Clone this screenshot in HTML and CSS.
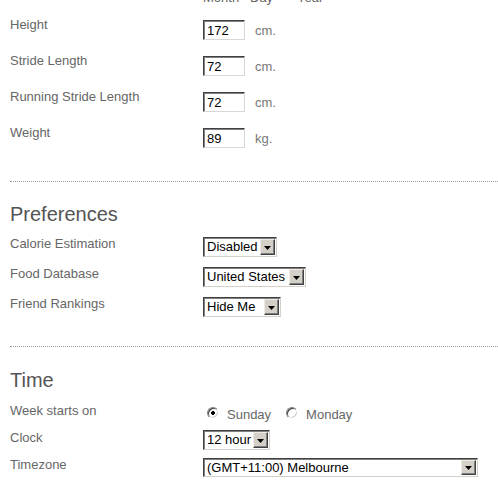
FILE: index.html
```html
<!DOCTYPE html>
<html>
<head>
<meta charset="utf-8">
<link rel="stylesheet" href="styles.css">
</head>
<body>
<div class="page">
  <div class="row dates">
    <span class="lbl"></span>
    <div class="ctl"><span class="d-month">Month</span><span class="d-day">Day</span><span class="d-year">Year</span></div>
  </div>

  <section class="group metrics">
    <div class="row"><label class="lbl">Height</label><div class="ctl"><input class="num" type="text" value="172"><span class="unit">cm.</span></div></div>
    <div class="row"><label class="lbl">Stride Length</label><div class="ctl"><input class="num" type="text" value="72"><span class="unit">cm.</span></div></div>
    <div class="row"><label class="lbl">Running Stride Length</label><div class="ctl"><input class="num" type="text" value="72"><span class="unit">cm.</span></div></div>
    <div class="row"><label class="lbl">Weight</label><div class="ctl"><input class="num" type="text" value="89"><span class="unit">kg.</span></div></div>
  </section>

  <hr class="dots first">

  <section class="group prefs">
    <h2 class="heading">Preferences</h2>
    <div class="row"><label class="lbl">Calorie Estimation</label><div class="ctl"><div class="select w-disabled"><select><option>Disabled</option></select><span class="btn"><svg width="7" height="4" viewBox="0 0 7 4"><path d="M0 0H7L3.5 4Z" fill="#000"/></svg></span></div></div></div>
    <div class="row"><label class="lbl">Food Database</label><div class="ctl"><div class="select w-us"><select><option>United States</option></select><span class="btn"><svg width="7" height="4" viewBox="0 0 7 4"><path d="M0 0H7L3.5 4Z" fill="#000"/></svg></span></div></div></div>
    <div class="row"><label class="lbl">Friend Rankings</label><div class="ctl"><div class="select w-hide"><select><option>Hide Me</option></select><span class="btn"><svg width="7" height="4" viewBox="0 0 7 4"><path d="M0 0H7L3.5 4Z" fill="#000"/></svg></span></div></div></div>
  </section>

  <hr class="dots second">

  <section class="group time">
    <h2 class="heading">Time</h2>
    <div class="row r-week"><label class="lbl">Week starts on</label>
      <div class="ctl radios">
        <label class="opt opt-sun"><input type="radio" name="week" checked><span>Sunday</span></label>
        <label class="opt opt-mon"><input type="radio" name="week"><span>Monday</span></label>
      </div>
    </div>
    <div class="row r-clock"><label class="lbl">Clock</label><div class="ctl"><div class="select w-clock"><select><option>12 hour</option></select><span class="btn"><svg width="7" height="4" viewBox="0 0 7 4"><path d="M0 0H7L3.5 4Z" fill="#000"/></svg></span></div></div></div>
    <div class="row r-tz"><label class="lbl">Timezone</label><div class="ctl"><div class="select w-tz"><select><option>(GMT+11:00) Melbourne</option></select><span class="btn"><svg width="7" height="4" viewBox="0 0 7 4"><path d="M0 0H7L3.5 4Z" fill="#000"/></svg></span></div></div></div>
  </section>
</div>
</body>
</html>
```

FILE: styles.css
```css
html, body {
  margin: 0;
  padding: 0;
  background: #fff;
}
body {
  font-family: "Liberation Sans", Arial, sans-serif;
  font-size: 13px;
  color: #666;
  overflow: hidden;
}
.page {
  padding-left: 10px;
}
.row {
  display: grid;
  grid-template-columns: 193px 1fr;
  align-items: start;
}
.lbl {
  line-height: 15px;
  color: #666;
}
.ctl {
  display: flex;
  align-items: center;
}

/* partially visible date row */
.dates {
  margin-top: -10px;
  height: 15px;
  margin-bottom: 12px;
  font-size: 13px;
  line-height: 15px;
  color: #666;
}
.d-month, .d-day { display: inline-block; width: 47px; }

/* body metrics */
.metrics .row { height: 36px; }
.metrics .ctl { margin-top: 3px; }
.num {
  box-sizing: border-box;
  width: 42px;
  height: 20px;
  margin: 0;
  padding: 0 3px;
  font-family: "Liberation Sans", Arial, sans-serif;
  font-size: 13px;
  color: #000;
  background: #fff;
  border: 1px solid;
  border-color: #404040 #d8d8d8 #d8d8d8 #404040;
  box-shadow: inset 1px 1px 0 #808080;
  outline: none;
}
.unit {
  margin-left: 10px;
  color: #777;
}

/* separators */
.dots {
  border: 0;
  border-top: 1px dotted #999;
  height: 0;
  margin: 0;
}
.dots.first { margin-top: 20px; margin-bottom: 20px; }
.dots.second { margin-top: 20px; margin-bottom: 21px; }

.heading {
  margin: 0;
  font-size: 20px;
  font-weight: normal;
  line-height: 24px;
  color: #555;
}

/* preferences */
.prefs .heading { margin-bottom: 10px; }
.prefs .row { height: 30px; }
.prefs .ctl { margin-top: 1px; }

/* select look */
.select {
  box-sizing: border-box;
  display: flex;
  align-items: stretch;
  height: 20px;
  background: #fff;
  border: 1px solid;
  border-color: #404040 #d4d0c8 #d4d0c8 #404040;
  box-shadow: inset 1px 1px 0 #808080;
  padding: 1px;
}
.select select {
  -webkit-appearance: none;
  appearance: none;
  flex: 1;
  min-width: 0;
  width: 100%;
  border: 0;
  margin: 0;
  padding: 0 0 0 2px;
  background: transparent;
  font-family: "Liberation Sans", Arial, sans-serif;
  font-size: 13px;
  color: #000;
  outline: none;
  line-height: 16px;
}
.btn {
  box-sizing: border-box;
  flex: 0 0 15px;
  width: 15px;
  display: flex;
  align-items: center;
  justify-content: center;
  background: #d4d0c8;
  border: 1px solid;
  border-color: #eeebe5 #404040 #404040 #eeebe5;
  box-shadow: inset -1px -1px 0 #808080;
}
.btn svg { display: block; margin-top: 1px; }
.w-disabled { width: 74px; }
.w-us { width: 103px; }
.w-hide { width: 78px; }
.w-clock { width: 67px; }
.w-tz { width: 275px; height: 19px; }

/* time */
.time .heading { margin-bottom: 11px; }
.r-week { height: 27px; }
.r-week .ctl { margin-top: 4px; }
.r-clock { height: 27px; }
.r-tz .ctl { margin-top: 1px; }

.radios { line-height: 15px; }
.opt {
  display: flex;
  align-items: center;
  color: #666;
}
.opt input {
  -webkit-appearance: none;
  appearance: none;
  box-sizing: border-box;
  width: 12px;
  height: 12px;
  margin: 0 8px 3px 0;
  border-radius: 50%;
  border: 1px solid;
  border-color: #808080 #fff #fff #808080;
  box-shadow: inset 1px 1px 0 #404040, inset -1px -1px 0 #d4d0c8;
  background: #fff;
}
.opt input:checked {
  background: radial-gradient(circle, #000 0, #000 1.6px, #fff 2.2px);
}
.opt-sun { margin-left: 4px; }
.opt-mon { margin-left: 15px; }
```
